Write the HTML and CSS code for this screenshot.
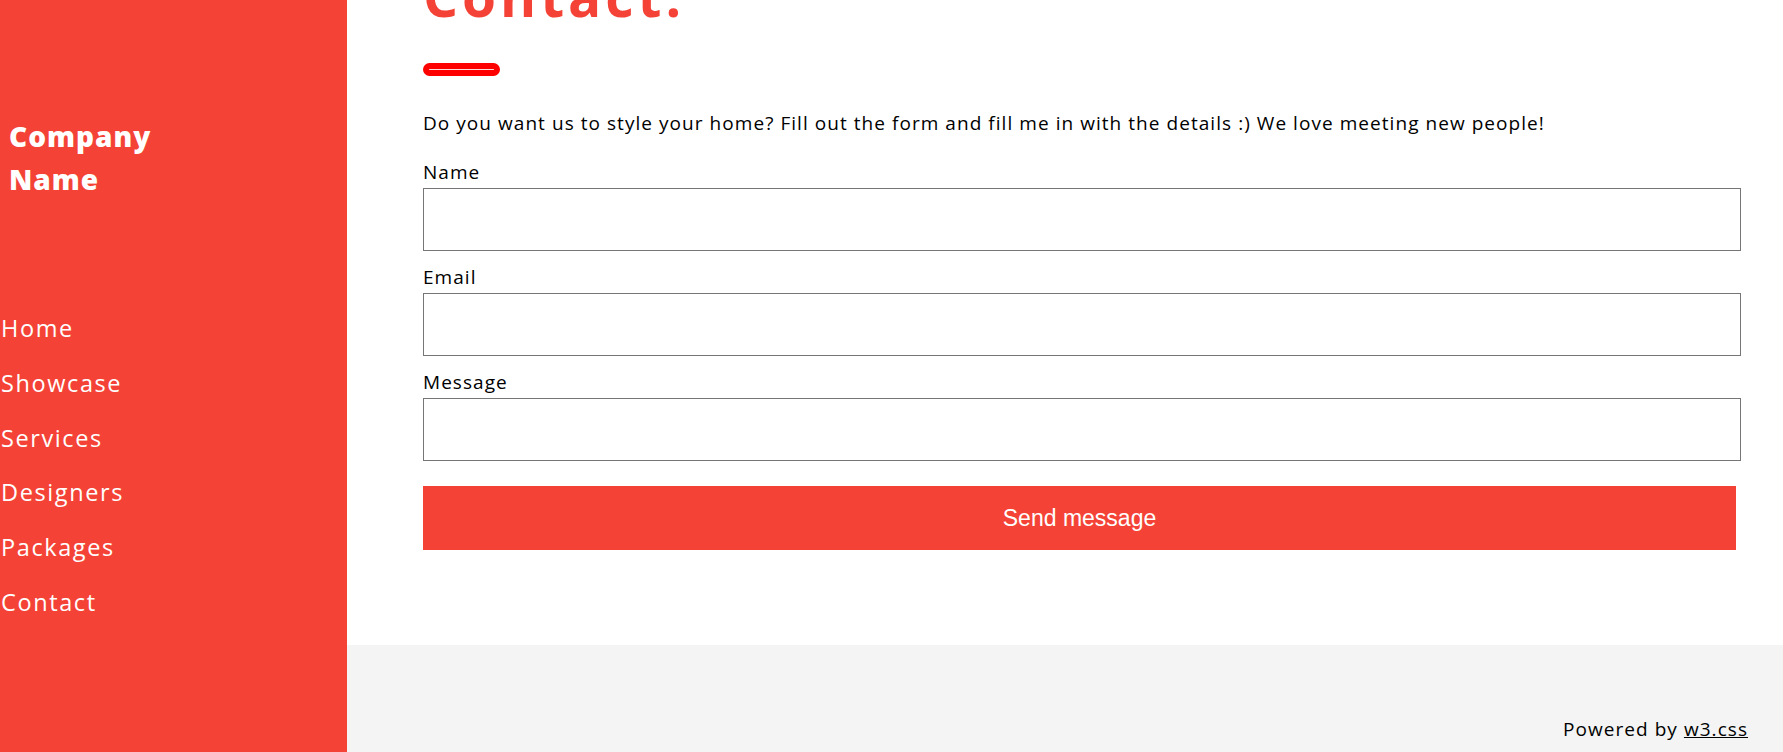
FILE: index.html
```html
<!DOCTYPE html>
<html lang="en">
<head>
<meta charset="utf-8">
<title>Contact</title>
<link rel="stylesheet" href="styles.css">
</head>
<body>
<div class="page">
  <nav class="sidebar">
    <h3 class="brand"><b>Company<br>Name</b></h3>
    <div class="menu">
      <a class="menu-item" href="#">Home</a>
      <a class="menu-item" href="#">Showcase</a>
      <a class="menu-item" href="#">Services</a>
      <a class="menu-item" href="#">Designers</a>
      <a class="menu-item" href="#">Packages</a>
      <a class="menu-item" href="#">Contact</a>
    </div>
  </nav>
  <main class="main">
    <section class="contact">
      <h1 class="title">Contact.</h1>
      <div class="rule"></div>
      <p class="intro">Do you want us to style your home? Fill out the form and fill me in with the details :) We love meeting new people!</p>
      <form class="form">
        <div class="field">
          <label class="label">Name</label>
          <input class="input" type="text">
        </div>
        <div class="field">
          <label class="label">Email</label>
          <input class="input" type="text">
        </div>
        <div class="field">
          <label class="label">Message</label>
          <input class="input" type="text">
        </div>
        <button class="send" type="button">Send message</button>
      </form>
    </section>
    <footer class="footer">
      <p class="powered">Powered by <a class="link" href="#">w3.css</a></p>
    </footer>
  </main>
</div>
</body>
</html>
```
FILE: styles.css
```css
html, body {
  margin: 0;
  padding: 0;
  height: 100%;
  overflow: hidden;
  background: #fff;
}
body {
  font-family: "Open Sans", "Liberation Sans", sans-serif;
  color: #000;
}
.page {
  display: flex;
  height: 752px;
}
.sidebar {
  width: 347px;
  flex: 0 0 347px;
  background: #f44336;
  color: #fff;
  display: flex;
  flex-direction: column;
}
.brand {
  margin: 115px 0 0 0;
  padding-left: 9px;
  font-size: 28px;
  line-height: 43px;
  font-weight: 700;
  letter-spacing: 1px;
}
.menu {
  margin-top: 100px;
  display: flex;
  flex-direction: column;
}
.menu-item {
  display: block;
  color: #fff;
  text-decoration: none;
  font-size: 23.5px;
  line-height: 54.8px;
  padding-left: 1px;
  letter-spacing: 1.6px;
}
.main {
  flex: 1;
  display: flex;
  flex-direction: column;
  min-width: 0;
}
.contact {
  padding: 0 42px 0 76px;
}
.title {
  margin: -34px 0 0 0;
  font-size: 55px;
  line-height: 60px;
  font-weight: 700;
  color: #f44336;
  letter-spacing: 4px;
}
.rule {
  margin-top: 37px;
  width: 65px;
  height: 1px;
  border: 6px solid #ff0000;
  border-radius: 7px;
  background: #ffd8d8;
}
.intro {
  margin: 33px 0 0 0;
  font-size: 19px;
  line-height: 28px;
  letter-spacing: 1.05px;
}
.form {
  margin-top: 22px;
  display: flex;
  flex-direction: column;
}
.field {
  display: flex;
  flex-direction: column;
  margin-bottom: 13px;
}
.label {
  font-size: 19px;
  line-height: 26px;
  margin-bottom: 3px;
  letter-spacing: 1.05px;
}
.input {
  box-sizing: border-box;
  height: 63px;
  margin: 0;
  border: 1px solid #767676;
  border-radius: 0;
  background: #fff;
  font: inherit;
  padding: 9px;
}
.send {
  margin: 12px 5px 0 0;
  height: 64px;
  border: none;
  background: #f44336;
  color: #fff;
  font-family: "Liberation Sans", Arial, sans-serif;
  font-size: 23px;
  cursor: pointer;
}
.footer {
  margin-top: 95px;
  flex: 1;
  background: #f3f4f3;
  display: flex;
  justify-content: flex-end;
  padding-right: 35px;
}
.powered {
  margin: 70px 0 0 0;
  font-size: 19px;
  line-height: 28px;
  letter-spacing: 1.05px;
}
.link {
  color: #000;
  text-decoration: underline;
}
```
